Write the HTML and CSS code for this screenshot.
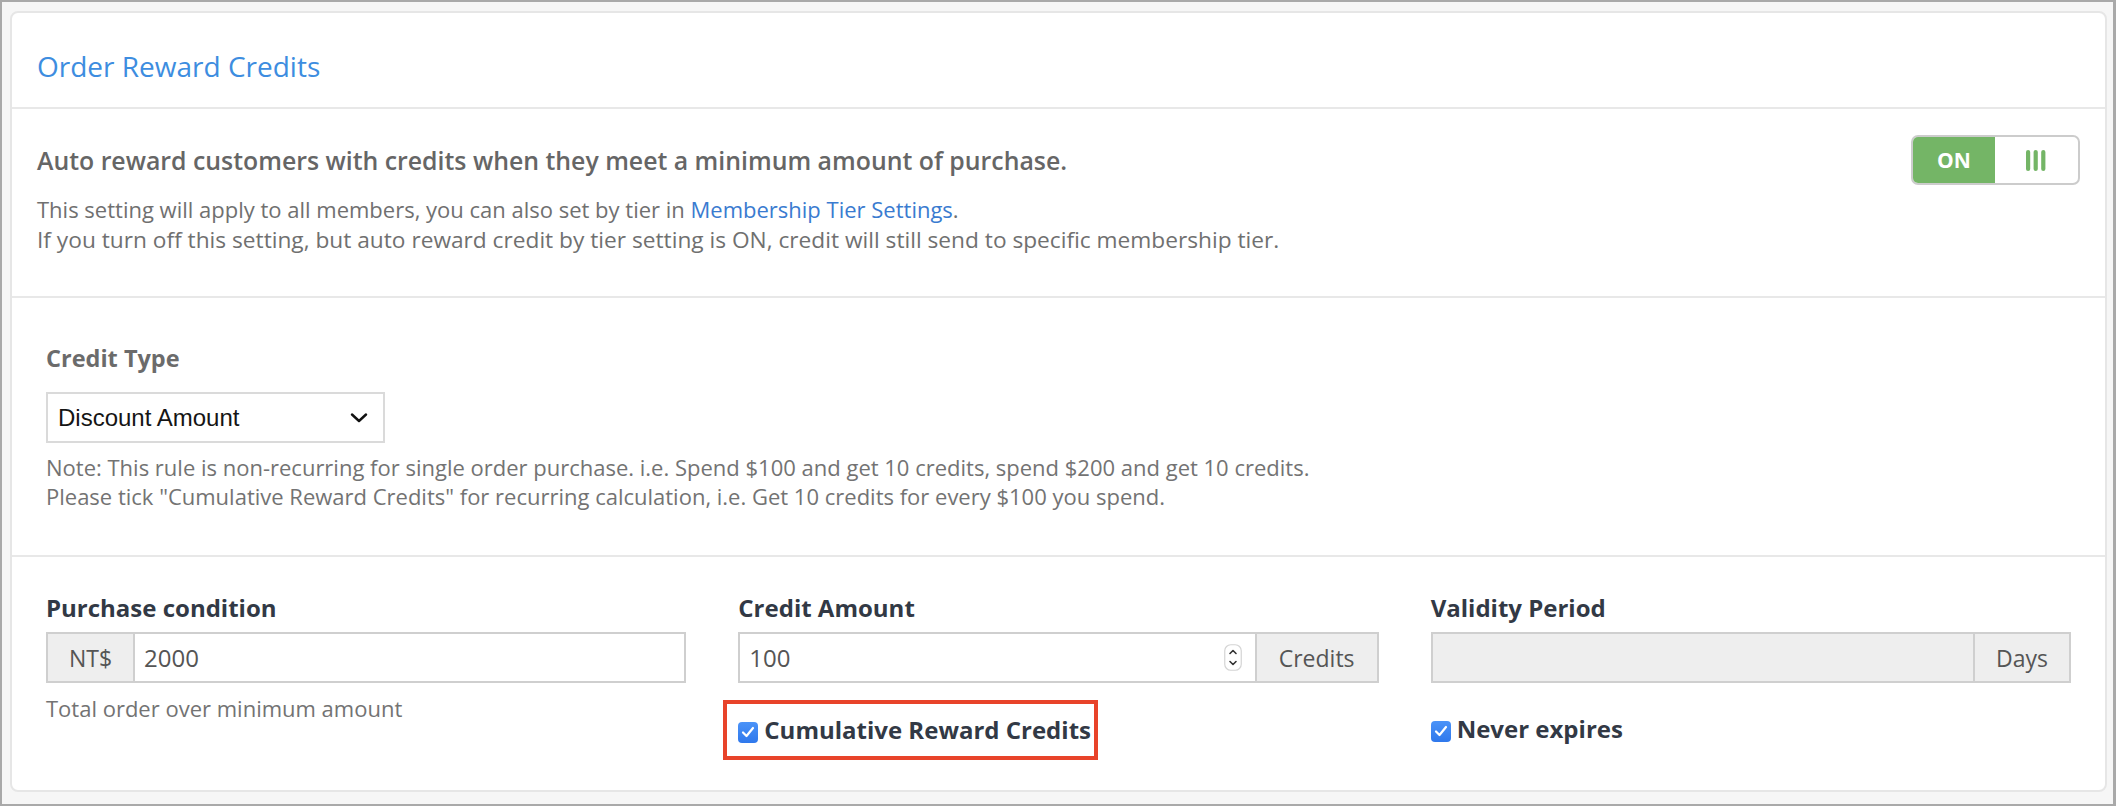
FILE: index.html
```html
<!DOCTYPE html>
<html lang="en">
<head>
<meta charset="utf-8">
<title>Order Reward Credits</title>
<link rel="stylesheet" href="styles.css">
</head>
<body>
<div class="frame">
  <div class="card">
    <div class="card-header">
      <h2 class="title">Order Reward Credits</h2>
    </div>

    <div class="section section-auto">
      <div class="auto-row">
        <div class="auto-title">Auto reward customers with credits when they meet a minimum amount of purchase.</div>
        <div class="toggle">
          <span class="toggle-on">ON</span>
          <span class="toggle-handle">
            <svg width="20" height="21" viewBox="0 0 20 21" aria-hidden="true">
              <rect x="0" y="0" width="4.2" height="21" rx="2.1" fill="#74b566"/>
              <rect x="7.6" y="0" width="4.2" height="21" rx="2.1" fill="#74b566"/>
              <rect x="15.2" y="0" width="4.2" height="21" rx="2.1" fill="#74b566"/>
            </svg>
          </span>
        </div>
      </div>
      <p class="desc">This setting will apply to all members, you can also set by tier in <a class="link" href="#">Membership Tier Settings</a>.<br><span class="desc-wide">If you turn off this setting, but auto reward credit by tier setting is ON, credit will still send to specific membership tier.</span></p>
    </div>

    <div class="section section-type">
      <div class="label label-muted">Credit Type</div>
      <div class="select-wrap">
        <select class="select">
          <option>Discount Amount</option>
          <option>Percentage</option>
        </select>
        <svg class="chevron" width="18" height="10" viewBox="0 0 18 10" aria-hidden="true">
          <path d="M2 1.5 L9 8 L16 1.5" fill="none" stroke="#111" stroke-width="2.4" stroke-linecap="round" stroke-linejoin="round"/>
        </svg>
      </div>
      <p class="note">Note: This rule is non-recurring for single order purchase. i.e. Spend $100 and get 10 credits, spend $200 and get 10 credits.<br>Please tick "Cumulative Reward Credits" for recurring calculation, i.e. Get 10 credits for every $100 you spend.</p>
    </div>

    <div class="section section-fields">
      <div class="fields">
        <div class="field">
          <div class="label">Purchase condition</div>
          <div class="input-group">
            <span class="addon addon-left">NT$</span>
            <input class="input" type="text" value="2000">
          </div>
          <p class="help">Total order over minimum amount</p>
        </div>

        <div class="field">
          <div class="label">Credit Amount</div>
          <div class="input-group">
            <div class="number-box">
              <input class="input" type="text" value="100">
              <span class="stepper">
                <svg width="18" height="27" viewBox="0 0 18 27" aria-hidden="true">
                  <rect x="0.75" y="0.75" width="16.5" height="25.5" rx="6" fill="#fff" stroke="#d4d4d4" stroke-width="1.2"/>
                  <path d="M6 9.5 L9 6.5 L12 9.5" fill="none" stroke="#333" stroke-width="1.6" stroke-linecap="round" stroke-linejoin="round"/>
                  <path d="M6 17.5 L9 20.5 L12 17.5" fill="none" stroke="#333" stroke-width="1.6" stroke-linecap="round" stroke-linejoin="round"/>
                </svg>
              </span>
            </div>
            <span class="addon addon-right addon-credits">Credits</span>
          </div>
          <label class="check-row highlight">
            <span class="checkbox">
              <svg width="14" height="12" viewBox="0 0 14 12" aria-hidden="true">
                <path d="M2 6.5 L5.5 10 L12 2" fill="none" stroke="#fff" stroke-width="2.2" stroke-linecap="round" stroke-linejoin="round"/>
              </svg>
            </span>
            <span class="check-label">Cumulative Reward Credits</span>
          </label>
        </div>

        <div class="field">
          <div class="label">Validity Period</div>
          <div class="input-group">
            <input class="input input-disabled" type="text" value="" disabled>
            <span class="addon addon-right addon-days">Days</span>
          </div>
          <label class="check-row check-plain">
            <span class="checkbox">
              <svg width="14" height="12" viewBox="0 0 14 12" aria-hidden="true">
                <path d="M2 6.5 L5.5 10 L12 2" fill="none" stroke="#fff" stroke-width="2.2" stroke-linecap="round" stroke-linejoin="round"/>
              </svg>
            </span>
            <span class="check-label">Never expires</span>
          </label>
        </div>
      </div>
    </div>
  </div>
</div>
</body>
</html>
```

FILE: styles.css
```css
* { box-sizing: border-box; }

html, body {
  margin: 0;
  padding: 0;
}

body {
  font-family: "Open Sans", "Liberation Sans", sans-serif;
  background: #ffffff;
}

.frame {
  width: 2116px;
  height: 806px;
  border: 2px solid #a9a9a9;
  border-right-width: 3px;
  background: #f6f6f6;
  padding: 9px 6px 12px 8px;
  display: flex;
}

.card {
  flex: 1;
  display: flex;
  flex-direction: column;
  background: #ffffff;
  border: 2px solid #e6e6e6;
  border-radius: 8px;
}

/* header */
.card-header {
  height: 96px;
  padding: 33px 25px 0;
  border-bottom: 2px solid #e8e8e8;
}

.title {
  margin: 0;
  font-size: 28px;
  line-height: 40px;
  font-weight: 400;
  color: #3d8de0;
}

/* sections */
.section {
  border-bottom: 2px solid #e8e8e8;
}

.section-auto {
  padding: 26px 25px 0;
  height: 189px;
}

.auto-row {
  display: flex;
  align-items: center;
  justify-content: space-between;
}

.auto-title {
  font-size: 24.85px;
  line-height: 36px;
  font-weight: 600;
  color: #666666;
}

.toggle {
  display: flex;
  width: 169px;
  height: 50px;
  border: 2px solid #cccccc;
  border-radius: 7px;
  overflow: hidden;
  background: #ffffff;
}

.toggle-on {
  width: 82px;
  display: flex;
  align-items: center;
  justify-content: center;
  background: #74b566;
  color: #ffffff;
  font-size: 21px;
  font-weight: 700;
}

.toggle-handle {
  flex: 1;
  display: flex;
  align-items: center;
  justify-content: center;
  padding-right: 2px;
}

.desc {
  margin: 9px 0 0;
  font-size: 22px;
  line-height: 30px;
  color: #707070;
}

.desc-wide {
  font-size: 22.7px;
}

.link {
  color: #3a7bd0;
  text-decoration: none;
}

.section-type {
  height: 259px;
  padding: 44px 34px 0;
}

.label {
  font-size: 24px;
  line-height: 32px;
  font-weight: 700;
  color: #323945;
}

.label-muted {
  font-size: 23.5px;
  color: #6b6b6b;
}

.select-wrap {
  margin-top: 18px;
  width: 339px;
  height: 51px;
  display: flex;
  align-items: center;
  border: 2px solid #dadada;
  background: #ffffff;
  padding: 0 15px 0 10px;
}

.select {
  flex: 1;
  appearance: none;
  -webkit-appearance: none;
  border: 0;
  background: transparent;
  padding: 0;
  font-family: "Liberation Sans", Arial, sans-serif;
  font-size: 24px;
  color: #151515;
  outline: none;
}

.chevron {
  display: block;
}

.note {
  margin: 10px 0 0;
  font-size: 22px;
  line-height: 29px;
  color: #737373;
}

.section-fields {
  flex: 1;
  border-bottom: 0;
  padding: 35px 34px 0;
}

.fields {
  display: grid;
  grid-template-columns: repeat(3, 1fr);
  column-gap: 52px;
}

.field {
  display: flex;
  flex-direction: column;
  align-items: flex-start;
}

.input-group {
  margin-top: 8px;
  width: 100%;
  height: 51px;
  display: flex;
  border: 2px solid #cfcfcf;
  background: #ffffff;
}

.addon {
  display: flex;
  align-items: center;
  justify-content: center;
  background: #eeeeee;
  font-size: 23px;
  color: #555555;
}

.addon-left {
  width: 87px;
  border-right: 2px solid #cfcfcf;
}

.addon-right {
  border-left: 2px solid #cfcfcf;
}

.addon-credits {
  width: 122px;
}

.addon-days {
  width: 96px;
}

.input {
  flex: 1;
  min-width: 0;
  border: 0;
  outline: none;
  background: transparent;
  padding: 0 9px;
  font-family: "Open Sans", "Liberation Sans", sans-serif;
  font-size: 24px;
  color: #555555;
}

.input-disabled {
  background: #eeeeee;
}

.number-box {
  flex: 1;
  display: flex;
  align-items: center;
  padding-right: 13px;
}

.stepper {
  display: flex;
}

.help {
  margin: 10px 0 0;
  font-size: 22px;
  line-height: 30px;
  color: #737373;
}

.check-row {
  display: inline-flex;
  align-items: center;
  gap: 6px;
  font-size: 24px;
  line-height: 34px;
  font-weight: 700;
  color: #323945;
}

.check-plain {
  margin-top: 29px;
}

.highlight {
  margin-top: 17px;
  margin-left: -15px;
  border: 4px solid #e8432a;
  padding: 9px 3px 9px 11px;
}

.checkbox {
  width: 20px;
  height: 21px;
  border-radius: 4px;
  background: linear-gradient(#4b93f8, #2f78ec);
  display: flex;
  align-items: center;
  justify-content: center;
  margin-top: 4px;
}

.checkbox svg {
  display: block;
}
```
